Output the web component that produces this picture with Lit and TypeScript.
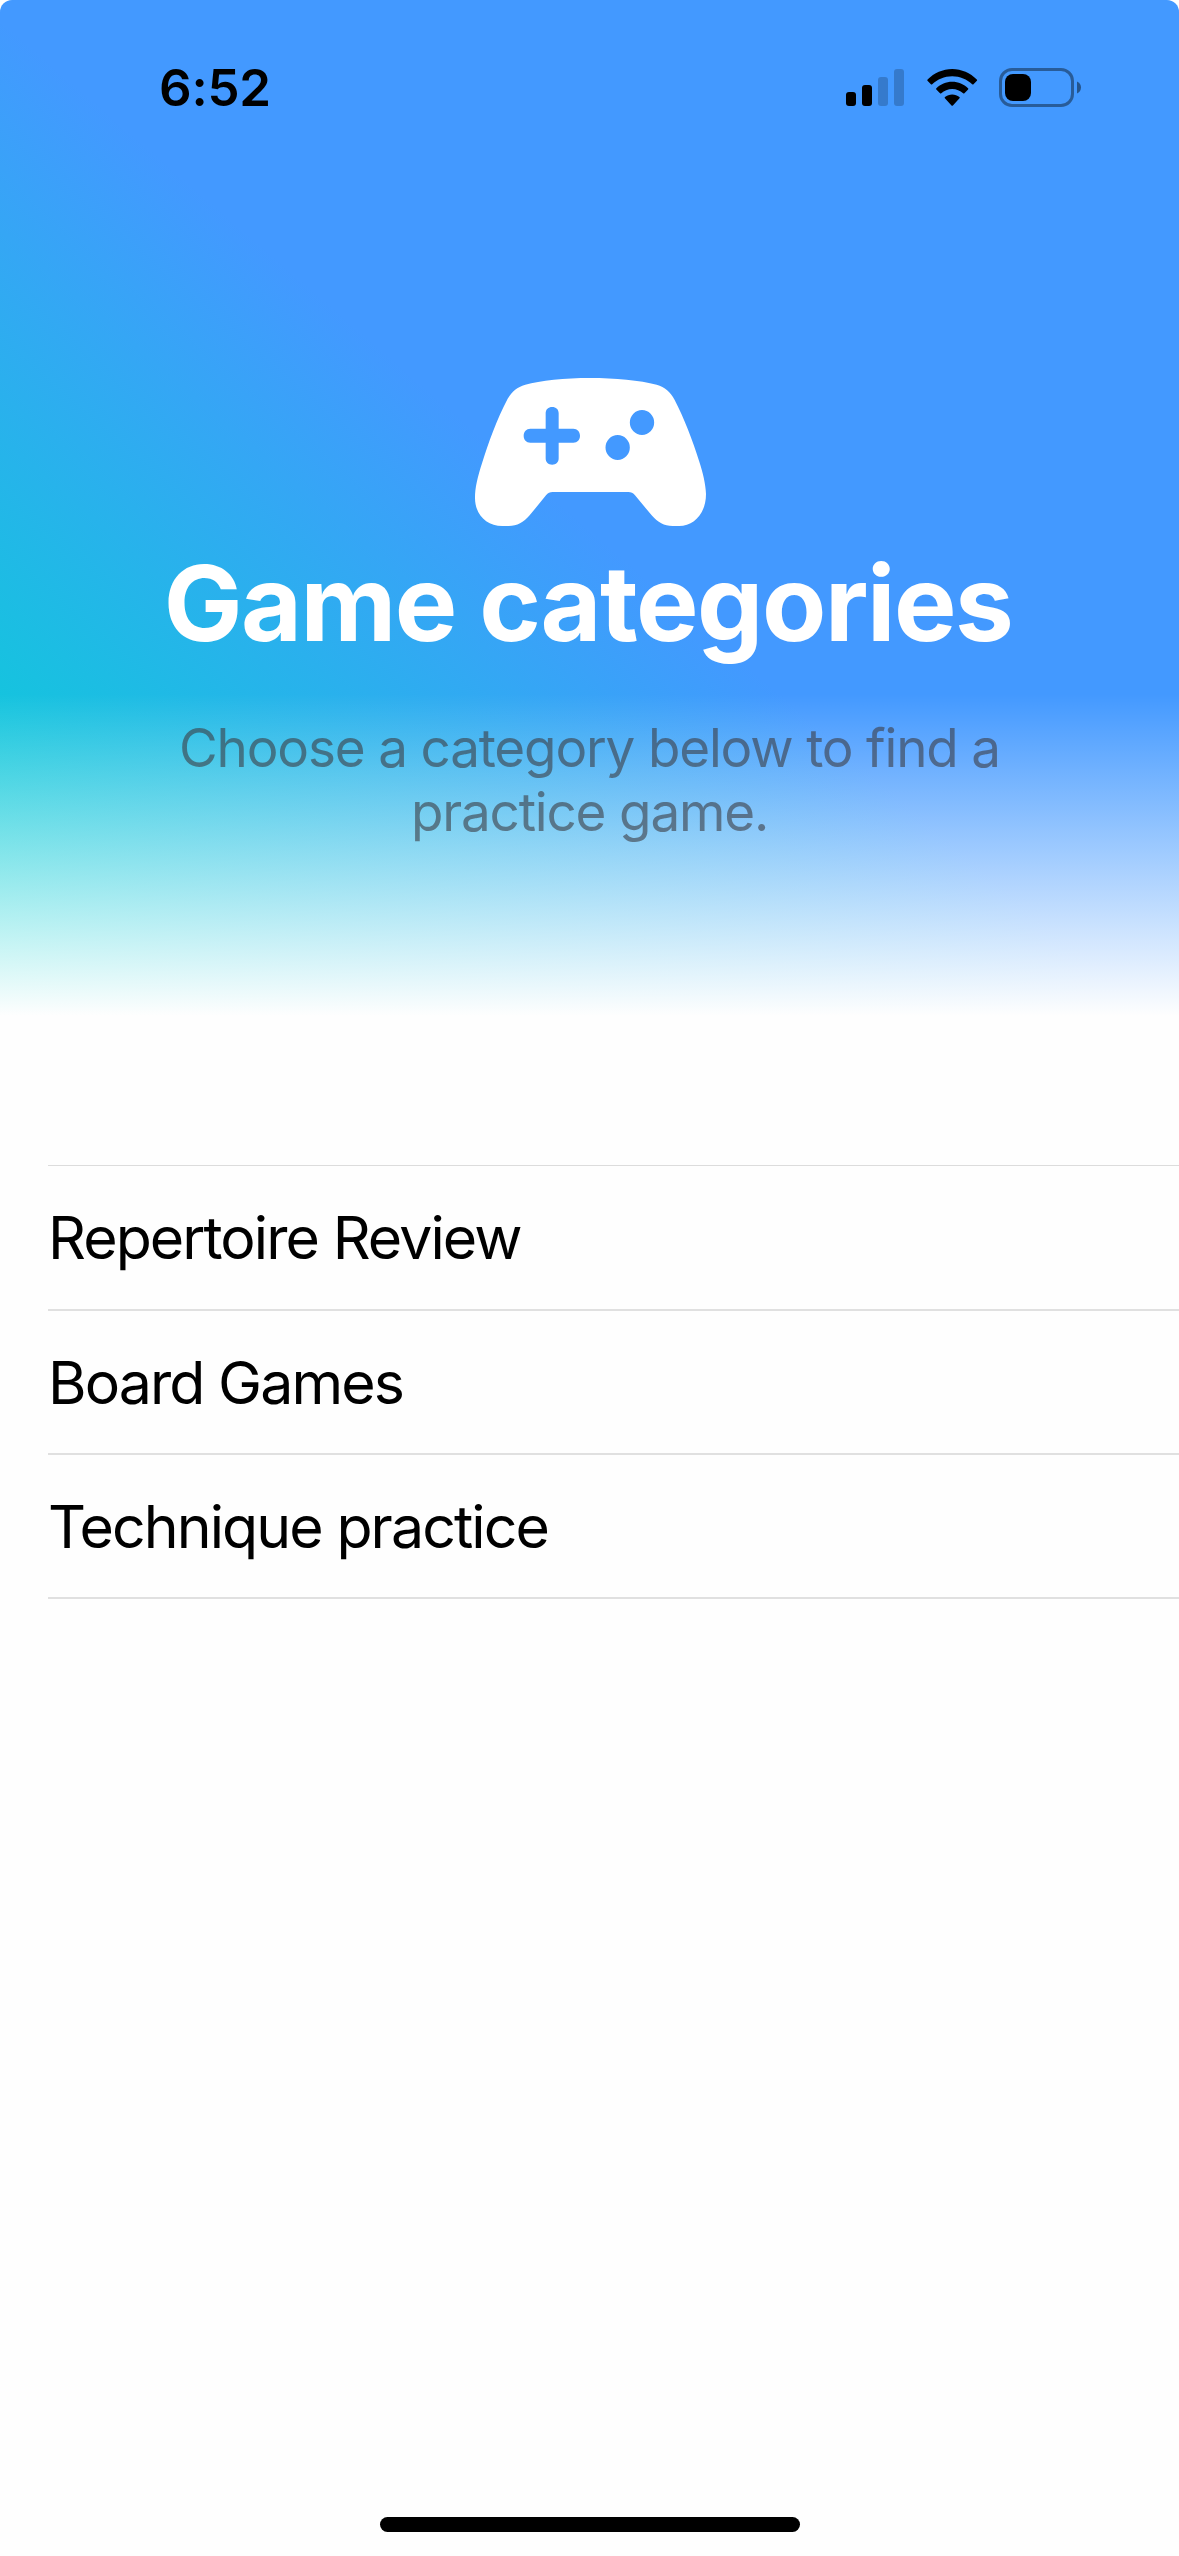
import { LitElement, html, svg, css } from "lit";
import { customElement, property } from "lit/decorators.js";

@customElement("status-bar")
export class StatusBar extends LitElement {
  @property() time = "";

  static styles = css`
    :host {
      display: flex;
      justify-content: space-between;
      align-items: flex-start;
      padding: 58px 97px 0 159px;
      color: #000;
    }
    .time {
      font-size: 51px;
      font-weight: 600;
      line-height: 60px;
      letter-spacing: -0.2px;
    }
    .icons {
      display: flex;
      align-items: flex-start;
      padding-top: 10px;
    }
    .signal { width: 58px; height: 39px; }
    .wifi { width: 52px; height: 39px; margin-left: 22px; }
    .battery { width: 83px; height: 39px; margin-left: 21px; }
    svg { display: block; }
  `;

  render() {
    return html`
      <div class="time">${this.time}</div>
      <div class="icons">
        <svg class="signal" viewBox="0 0 58 39">
          <rect x="0" y="24" width="10" height="14" rx="3" />
          <rect x="16" y="17" width="10" height="21" rx="3" />
          <rect x="32" y="9" width="10" height="29" rx="3" opacity="0.2" />
          <rect x="48" y="1" width="10" height="37" rx="3" opacity="0.2" />
        </svg>
        <svg class="wifi" viewBox="0 0 52 39">
          <path d="M26.2 8.2C34 8.200 41 11.200 46.200 16.200Q46.900 16.800 47.500 16.200L50.900 12.800Q51.500 12.100 50.800 11.400C44.200 5.100 35.600 1 26.200 1C16.800 1 8.200 5.100 1.600 11.400Q0.900 12.100 1.500 12.800L4.900 16.200Q5.500 16.800 6.200 16.200C11.400 11.200 18.400 8.200 26.200 8.200Z" />
          <path d="M26.200 20.900C30.400 20.900 34.200 22.500 37.100 25.200Q37.800 25.800 38.400 25.200L42.100 21.500Q42.700 20.800 42 20.200C37.900 16.300 32.300 13.800 26.200 13.800C20.100 13.800 14.500 16.300 10.400 20.200Q9.700 20.800 10.300 21.500L14 25.200Q14.600 25.800 15.300 25.200C18.200 22.500 22 20.900 26.200 20.900Z" />
          <path d="M33.500 30.200Q34.100 29.600 33.400 29C31.400 27.400 28.900 26.500 26.200 26.500C23.500 26.500 21 27.400 19 29Q18.300 29.600 18.900 30.200L25.500 37.400Q26.200 38.100 26.900 37.400Z" />
        </svg>
        <svg class="battery" viewBox="0 0 83 39">
          <rect x="1.500" y="1.500" width="72" height="36" rx="11.500" fill="none" stroke="#000" stroke-opacity="0.4" stroke-width="3" />
          <rect x="6" y="6" width="26" height="27" rx="8" />
          <path d="M78 13.500V25.500C80.400 24.500 82 22.200 82 19.500C82 16.800 80.400 14.500 78 13.500Z" opacity="0.450" />
        </svg>
      </div>
    `;
  }
}

@customElement("category-hero")
export class CategoryHero extends LitElement {
  static styles = css`
    :host {
      display: flex;
      flex-direction: column;
      align-items: center;
      text-align: center;
    }
    .icon { display: block; width: 231px; height: 148px; margin-left: 2px; }
    .title {
      margin: 17px 3px 0 0;
      font-size: 105px;
      font-weight: 700;
      line-height: 120px;
      letter-spacing: -1.48px;
      color: #fff;
      white-space: nowrap;
    }
    .subtitle {
      margin: 53px 0 0;
      width: 860px;
      font-size: 53px;
      line-height: 64px;
      letter-spacing: -1.18px;
      color: rgba(60, 60, 67, 0.6);
    }
  `;

  private gamepad = svg`
    <path fill="#fff" fill-rule="evenodd" d="
      M345 0C270 0 195 8 151 20C125 28 112 39 98 62C65 125 40 195 22 253C7 300 0 330 0 360
      C0 410 35 444 82 444H101C127 444 145 434 164 412L213 352Q221 342 233 342H460Q472 342 480 352L530 412
      C549 434 567 444 593 444H612C658 444 693 405 693 348C692 318 684 285 672 248C654 190 627 120 599 66
      C586 40 570 28 545 20C495 7 420 0 345 0Z
      M212 106C212 94 220 87 231.500 87C243 87 251 94 251 106V152H295C307 152 315 161 315 173C315 185 307 194 295 194H251V241
      C251 253 243 260 231.500 260C220 260 212 253 212 241V194H166C154 194 146 185 146 173C146 161 154 152 166 152H212Z
      M464.500 133.500a36.500 37.500 0 1 0 73 0a36.500 37.500 0 1 0 -73 0Z
      M391.500 208.500a36.500 37.500 0 1 0 73 0a36.500 37.500 0 1 0 -73 0Z" />
  `;

  render() {
    return html`
      <svg class="icon" viewBox="0 0 693 444">${this.gamepad}</svg>
      <h1 class="title">Game categories</h1>
      <p class="subtitle">Choose a category below to find a practice game.</p>
    `;
  }
}

@customElement("category-list")
export class CategoryList extends LitElement {
  @property({ attribute: false }) items: string[] = [];

  static styles = css`
    :host { display: block; padding-left: 48px; }
    .list {
      margin: 0;
      padding: 0;
      list-style: none;
      border-top: 1px solid #dcdcdc;
    }
    .row {
      box-sizing: border-box;
      height: 144px;
      display: flex;
      align-items: center;
      border-bottom: 2px solid #e0e0e0;
      font-size: 59px;
      letter-spacing: -1.92px;
      color: #000;
    }
    .row:first-child { height: 145px; }
  `;

  render() {
    return html`<ul class="list">
      ${this.items.map((item) => html`<li class="row">${item}</li>`)}
    </ul>`;
  }
}

@customElement("app-root")
export class AppRoot extends LitElement {
  static styles = css`
    :host { display: block; background: #fff; }
    .screen {
      box-sizing: border-box;
      width: 1179px;
      height: 2556px;
      display: flex;
      flex-direction: column;
      overflow: hidden;
      border-radius: 12px 12px 0 0;
      background: #fefefe;
      font-family: Inter, "Liberation Sans", sans-serif;
    }
    .top {
      height: 1018px;
      flex: none;
      background:
        linear-gradient(to bottom, rgba(254, 254, 254, 0) 694px, #fefefe 1016px),
        linear-gradient(to bottom left, #4399ff 51%, #00d7cf 100%);
    }
    .hero { margin-top: 260px; }
    .categories { margin-top: 147px; }
    .home {
      width: 420px;
      height: 15px;
      margin: auto auto 24px;
      border-radius: 7.5px;
      background: #000;
    }
  `;

  private categories = ["Repertoire Review", "Board Games", "Technique practice"];

  render() {
    return html`
      <div class="screen">
        <header class="top">
          <status-bar time="6:52"></status-bar>
          <category-hero class="hero"></category-hero>
        </header>
        <category-list class="categories" .items=${this.categories}></category-list>
        <div class="home"></div>
      </div>
    `;
  }
}
